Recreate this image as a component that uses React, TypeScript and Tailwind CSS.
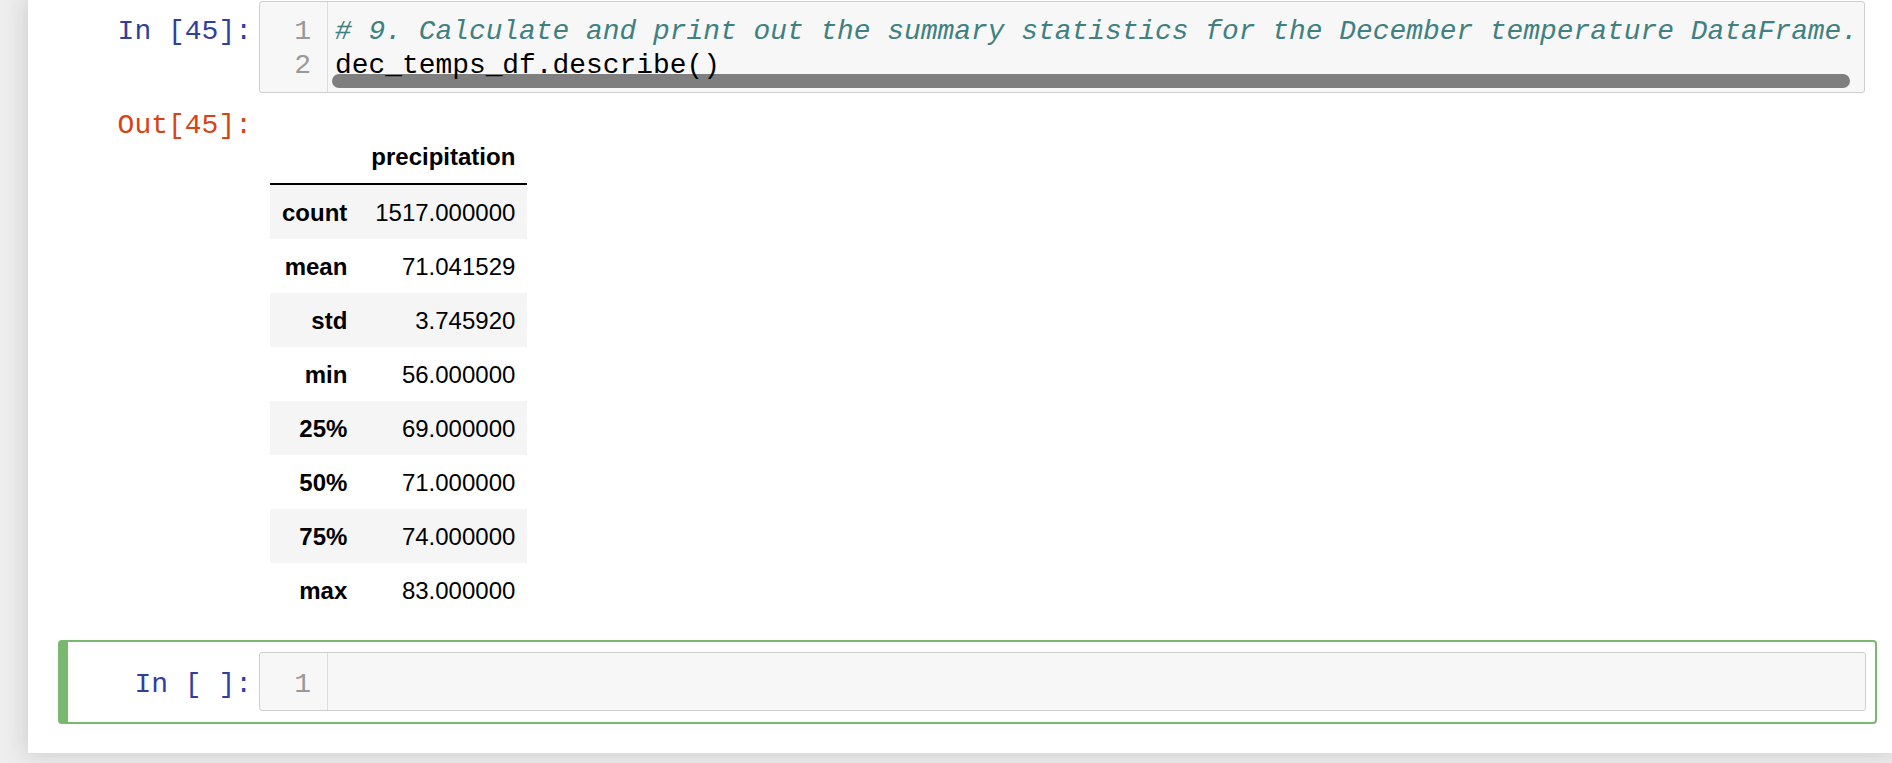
import React from "react";

const mono = { fontFamily: '"Liberation Mono", "Courier New", monospace' };

const rows: [string, string][] = [
  ["count", "1517.000000"],
  ["mean", "71.041529"],
  ["std", "3.745920"],
  ["min", "56.000000"],
  ["25%", "69.000000"],
  ["50%", "71.000000"],
  ["75%", "74.000000"],
  ["max", "83.000000"],
];

export default function App() {
  return (
    <div className="w-full h-[763px] bg-[#eeeeee] overflow-hidden pl-[28px]">
      <div className="h-[753px] bg-white shadow-[0_0_22px_2px_rgba(87,87,87,0.22)] flex flex-col">
        {/* Cell 45 input */}
        <div className="mt-[1px] ml-[30px] w-[1819px] border-l-[10px] border-transparent flex">
          <div
            className="w-[191px] shrink-0 text-right pr-[7px] pt-[14px] text-[28px] leading-[34px] text-[#303F9F]"
            style={mono}
          >
            {"In [45]:"}
          </div>
          <div className="relative w-[1606px] h-[92px] border border-[#cfcfcf] rounded-[3px] bg-[#f7f7f7] flex overflow-hidden">
            <div className="absolute left-[72px] top-[72px] w-[1518px] h-[14px] rounded-full bg-[#7f7f7f]" />
            <div
              className="w-[68px] shrink-0 border-r border-[#dddddd] pt-[13px] pr-[16px] text-right text-[28px] leading-[34px] text-[#999999]"
              style={mono}
            >
              <div>1</div>
              <div>2</div>
            </div>
            <div
              className="relative z-10 pt-[13px] pl-[7px] text-[27.9px] leading-[34px] whitespace-pre text-black"
              style={mono}
            >
              <div className="italic text-[#408080]">
                # 9. Calculate and print out the summary statistics for the December temperature DataFrame.
              </div>
              <div>dec_temps_df.describe()</div>
            </div>
          </div>
        </div>

        {/* Output */}
        <div className="mt-[7px] ml-[30px] w-[1819px] border-l-[10px] border-transparent flex">
          <div
            className="w-[191px] shrink-0 text-right pr-[7px] pt-[9px] text-[28px] leading-[34px] text-[#D84315]"
            style={mono}
          >
            {"Out[45]:"}
          </div>
          <div className="mt-[29px] ml-[11px]" style={{ fontFamily: '"Liberation Sans", Arial, sans-serif' }}>
            <table className="border-collapse text-[24px] leading-[30px] text-black">
              <thead>
                <tr className="border-b-2 border-black">
                  <th className="px-[12px] pt-[13px] pb-[11px]"></th>
                  <th className="px-[12px] pt-[13px] pb-[11px] text-right font-bold">precipitation</th>
                </tr>
              </thead>
              <tbody>
                {rows.map(([k, v], i) => (
                  <tr key={k} className={i % 2 === 0 ? "bg-[#f5f5f5]" : "bg-white"}>
                    <th className="px-[12px] pt-[13px] pb-[11px] text-right font-bold">{k}</th>
                    <td className="px-[12px] pt-[13px] pb-[11px] text-right">{v}</td>
                  </tr>
                ))}
              </tbody>
            </table>
          </div>
        </div>

        {/* Empty selected cell */}
        <div className="mt-[23px] ml-[30px] w-[1819px] border-2 border-l-[10px] border-[#7ab870] rounded-[4px] flex pt-[10px] pb-[11px]">
          <div
            className="w-[191px] shrink-0 text-right pr-[7px] pt-[16px] text-[28px] leading-[34px] text-[#303F9F]"
            style={mono}
          >
            {"In [ ]:"}
          </div>
          <div className="w-[1607px] h-[59px] border border-[#cfcfcf] rounded-[3px] bg-[#f7f7f7] flex overflow-hidden">
            <div
              className="w-[68px] shrink-0 border-r border-[#dddddd] pt-[15px] pr-[16px] text-right text-[28px] leading-[34px] text-[#999999]"
              style={mono}
            >
              1
            </div>
            <div className="flex-1" />
          </div>
        </div>
      </div>
    </div>
  );
}
